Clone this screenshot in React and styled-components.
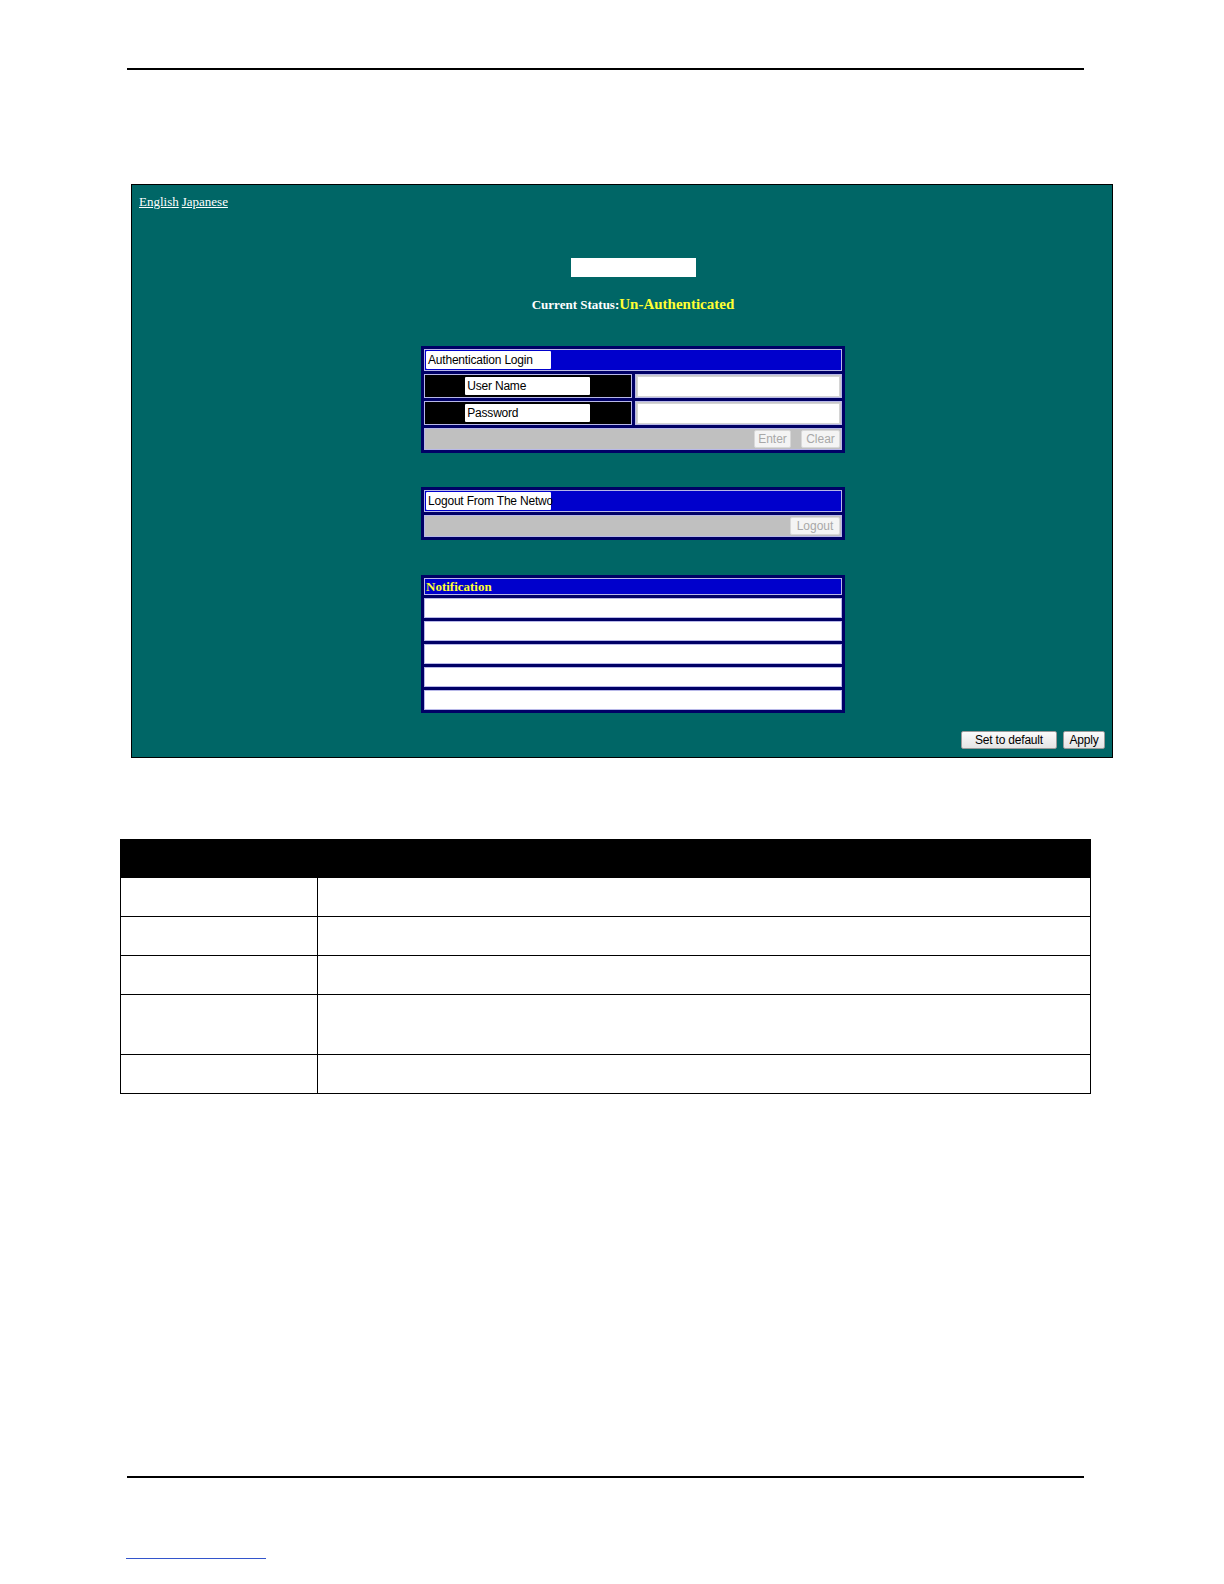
import React from "react";
import styled, { createGlobalStyle } from "styled-components";

const Global = createGlobalStyle`
  html, body { margin: 0; padding: 0; background: #ffffff; }
  body { font-family: "Liberation Sans", Arial, sans-serif; }
`;

const Page = styled.div`
  width: 1224px;
  height: 1584px;
  display: flex;
  flex-direction: column;
  overflow: hidden;
`;

const Rule = styled.div`
  margin-left: 127px;
  margin-top: ${(p) => p.$top}px;
  width: 957px;
  height: 2px;
  background: #000;
`;

const Panel = styled.div`
  margin-left: 131px;
  margin-top: 114px;
  width: 980px;
  height: 572px;
  border: 1px solid #000;
  background: #006666;
  display: flex;
  flex-direction: column;
`;

const LangRow = styled.div`
  padding: 9px 0 0 7px;
  display: flex;
  gap: 3px;
  font-family: "Liberation Serif", "Times New Roman", serif;
  font-size: 13px;
  line-height: 15px;
`;

const LangLink = styled.a`
  color: #ffffff;
  text-decoration: underline;
`;

const Center = styled.div`
  margin-left: 289px;
  width: 424px;
  display: flex;
  flex-direction: column;
  align-items: center;
`;

const TitleBox = styled.div`
  margin-top: 49px;
  width: 125px;
  height: 19px;
  background: #ffffff;
`;

const Status = styled.div`
  margin-top: 18px;
  font-family: "Liberation Serif", "Times New Roman", serif;
  font-weight: bold;
  font-size: 13px;
  line-height: 18px;
  color: #ffffff;
  white-space: nowrap;
`;

const StatusValue = styled.span`
  color: #ffff33;
  font-size: 15px;
`;

const Table = styled.div`
  margin-top: ${(p) => p.$top}px;
  width: 418px;
  border: 3px solid #000066;
  background: #000066;
  display: grid;
  grid-template-columns: 1fr 1fr;
  gap: 3px;
`;

const Cell = styled.div`
  box-sizing: border-box;
  grid-column: ${(p) => (p.$span ? "1 / span 2" : "auto")};
  height: ${(p) => p.$h}px;
  border: 1px solid #b8b8e8;
  background: ${(p) => p.$bg};
  display: flex;
  align-items: center;
  justify-content: ${(p) => p.$justify || "flex-start"};
  padding: 0 ${(p) => p.$pad ?? 0}px;
  gap: 10px;
`;

const LabelBox = styled.div`
  box-sizing: border-box;
  width: 125px;
  height: 18px;
  background: #ffffff;
  border-radius: 1px;
  padding-left: 2px;
  font-size: 12px;
  line-height: 18px;
  color: #000;
  white-space: nowrap;
  letter-spacing: -0.2px;
`;

const Input = styled.div`
  box-sizing: border-box;
  width: 100%;
  height: 21px;
  background: #ffffff;
  border: 1px solid #d4d4d4;
  border-radius: 1px;
`;

const FormButton = styled.div`
  box-sizing: border-box;
  height: 18px;
  width: ${(p) => p.$w}px;
  background: #f4f4f4;
  border: 1px solid #d8d8d8;
  border-radius: 2px;
  color: #a8a8a8;
  font-size: 12px;
  line-height: 16px;
  text-align: center;
`;

const NoteTitle = styled.div`
  padding-left: 1px;
  font-family: "Liberation Serif", "Times New Roman", serif;
  font-weight: bold;
  font-size: 13px;
  color: #ffff33;
  line-height: 15px;
`;

const ActionRow = styled.div`
  margin-top: 18px;
  padding-right: 7px;
  display: flex;
  justify-content: flex-end;
  gap: 6px;
`;

const ActionButton = styled.div`
  box-sizing: border-box;
  width: ${(p) => p.$w}px;
  height: 18px;
  background: linear-gradient(#fbfbfb, #e4e4e4);
  border: 1px solid #9a9a9a;
  border-radius: 2px;
  font-size: 12px;
  line-height: 16px;
  color: #000;
  text-align: center;
  letter-spacing: -0.2px;
`;

const DescTable = styled.div`
  margin-left: 120px;
  margin-top: 81px;
  width: 971px;
  display: grid;
  grid-template-columns: 197px 1fr;
`;

const DescHead = styled.div`
  grid-column: 1 / span 2;
  height: 39px;
  background: #000;
`;

const DescCell = styled.div`
  box-sizing: border-box;
  height: ${(p) => p.$h}px;
  border-bottom: 1.5px solid #000;
  border-left: 1.5px solid #000;
  border-right: ${(p) => (p.$last ? "1.5px solid #000" : "none")};
`;

const FooterLink = styled.div`
  margin-left: 126px;
  margin-top: 80px;
  width: 140px;
  height: 1px;
  background: #3355cc;
`;

const rows = [39, 39, 39, 60, 39];

export default function App() {
  return (
    <Page>
      <Global />
      <Rule $top={68} />
      <Panel>
        <LangRow>
          <LangLink href="#">English</LangLink>
          <LangLink href="#">Japanese</LangLink>
        </LangRow>
        <Center>
          <TitleBox />
          <Status>
            Current Status:<StatusValue>Un-Authenticated</StatusValue>
          </Status>

          <Table $top={32}>
            <Cell $span $h={22} $bg="#0000cc" $pad={1}>
              <LabelBox>Authentication Login</LabelBox>
            </Cell>
            <Cell $h={24} $bg="#000000" $justify="center">
              <LabelBox>User Name</LabelBox>
            </Cell>
            <Cell $h={24} $bg="#c8c8c8" $pad={1}>
              <Input />
            </Cell>
            <Cell $h={24} $bg="#000000" $justify="center">
              <LabelBox>Password</LabelBox>
            </Cell>
            <Cell $h={24} $bg="#c8c8c8" $pad={1}>
              <Input />
            </Cell>
            <Cell $span $h={22} $bg="#c0c0c0" $justify="flex-end" $pad={1}>
              <FormButton $w={37}>Enter</FormButton>
              <FormButton $w={39}>Clear</FormButton>
            </Cell>
          </Table>

          <Table $top={34}>
            <Cell $span $h={22} $bg="#0000cc" $pad={1}>
              <LabelBox>Logout From The Netwo</LabelBox>
            </Cell>
            <Cell $span $h={22} $bg="#c0c0c0" $justify="flex-end" $pad={1}>
              <FormButton $w={50}>Logout</FormButton>
            </Cell>
          </Table>

          <Table $top={35}>
            <Cell $span $h={17} $bg="#0000cc">
              <NoteTitle>Notification</NoteTitle>
            </Cell>
            {[0, 1, 2, 3, 4].map((i) => (
              <Cell key={i} $span $h={20} $bg="#ffffff" />
            ))}
          </Table>
        </Center>
        <ActionRow>
          <ActionButton $w={96}>Set to default</ActionButton>
          <ActionButton $w={42}>Apply</ActionButton>
        </ActionRow>
      </Panel>

      <DescTable>
        <DescHead />
        {rows.map((h, i) => (
          <React.Fragment key={i}>
            <DescCell $h={h} />
            <DescCell $h={h} $last />
          </React.Fragment>
        ))}
      </DescTable>

      <Rule $top={382} />
      <FooterLink />
    </Page>
  );
}
